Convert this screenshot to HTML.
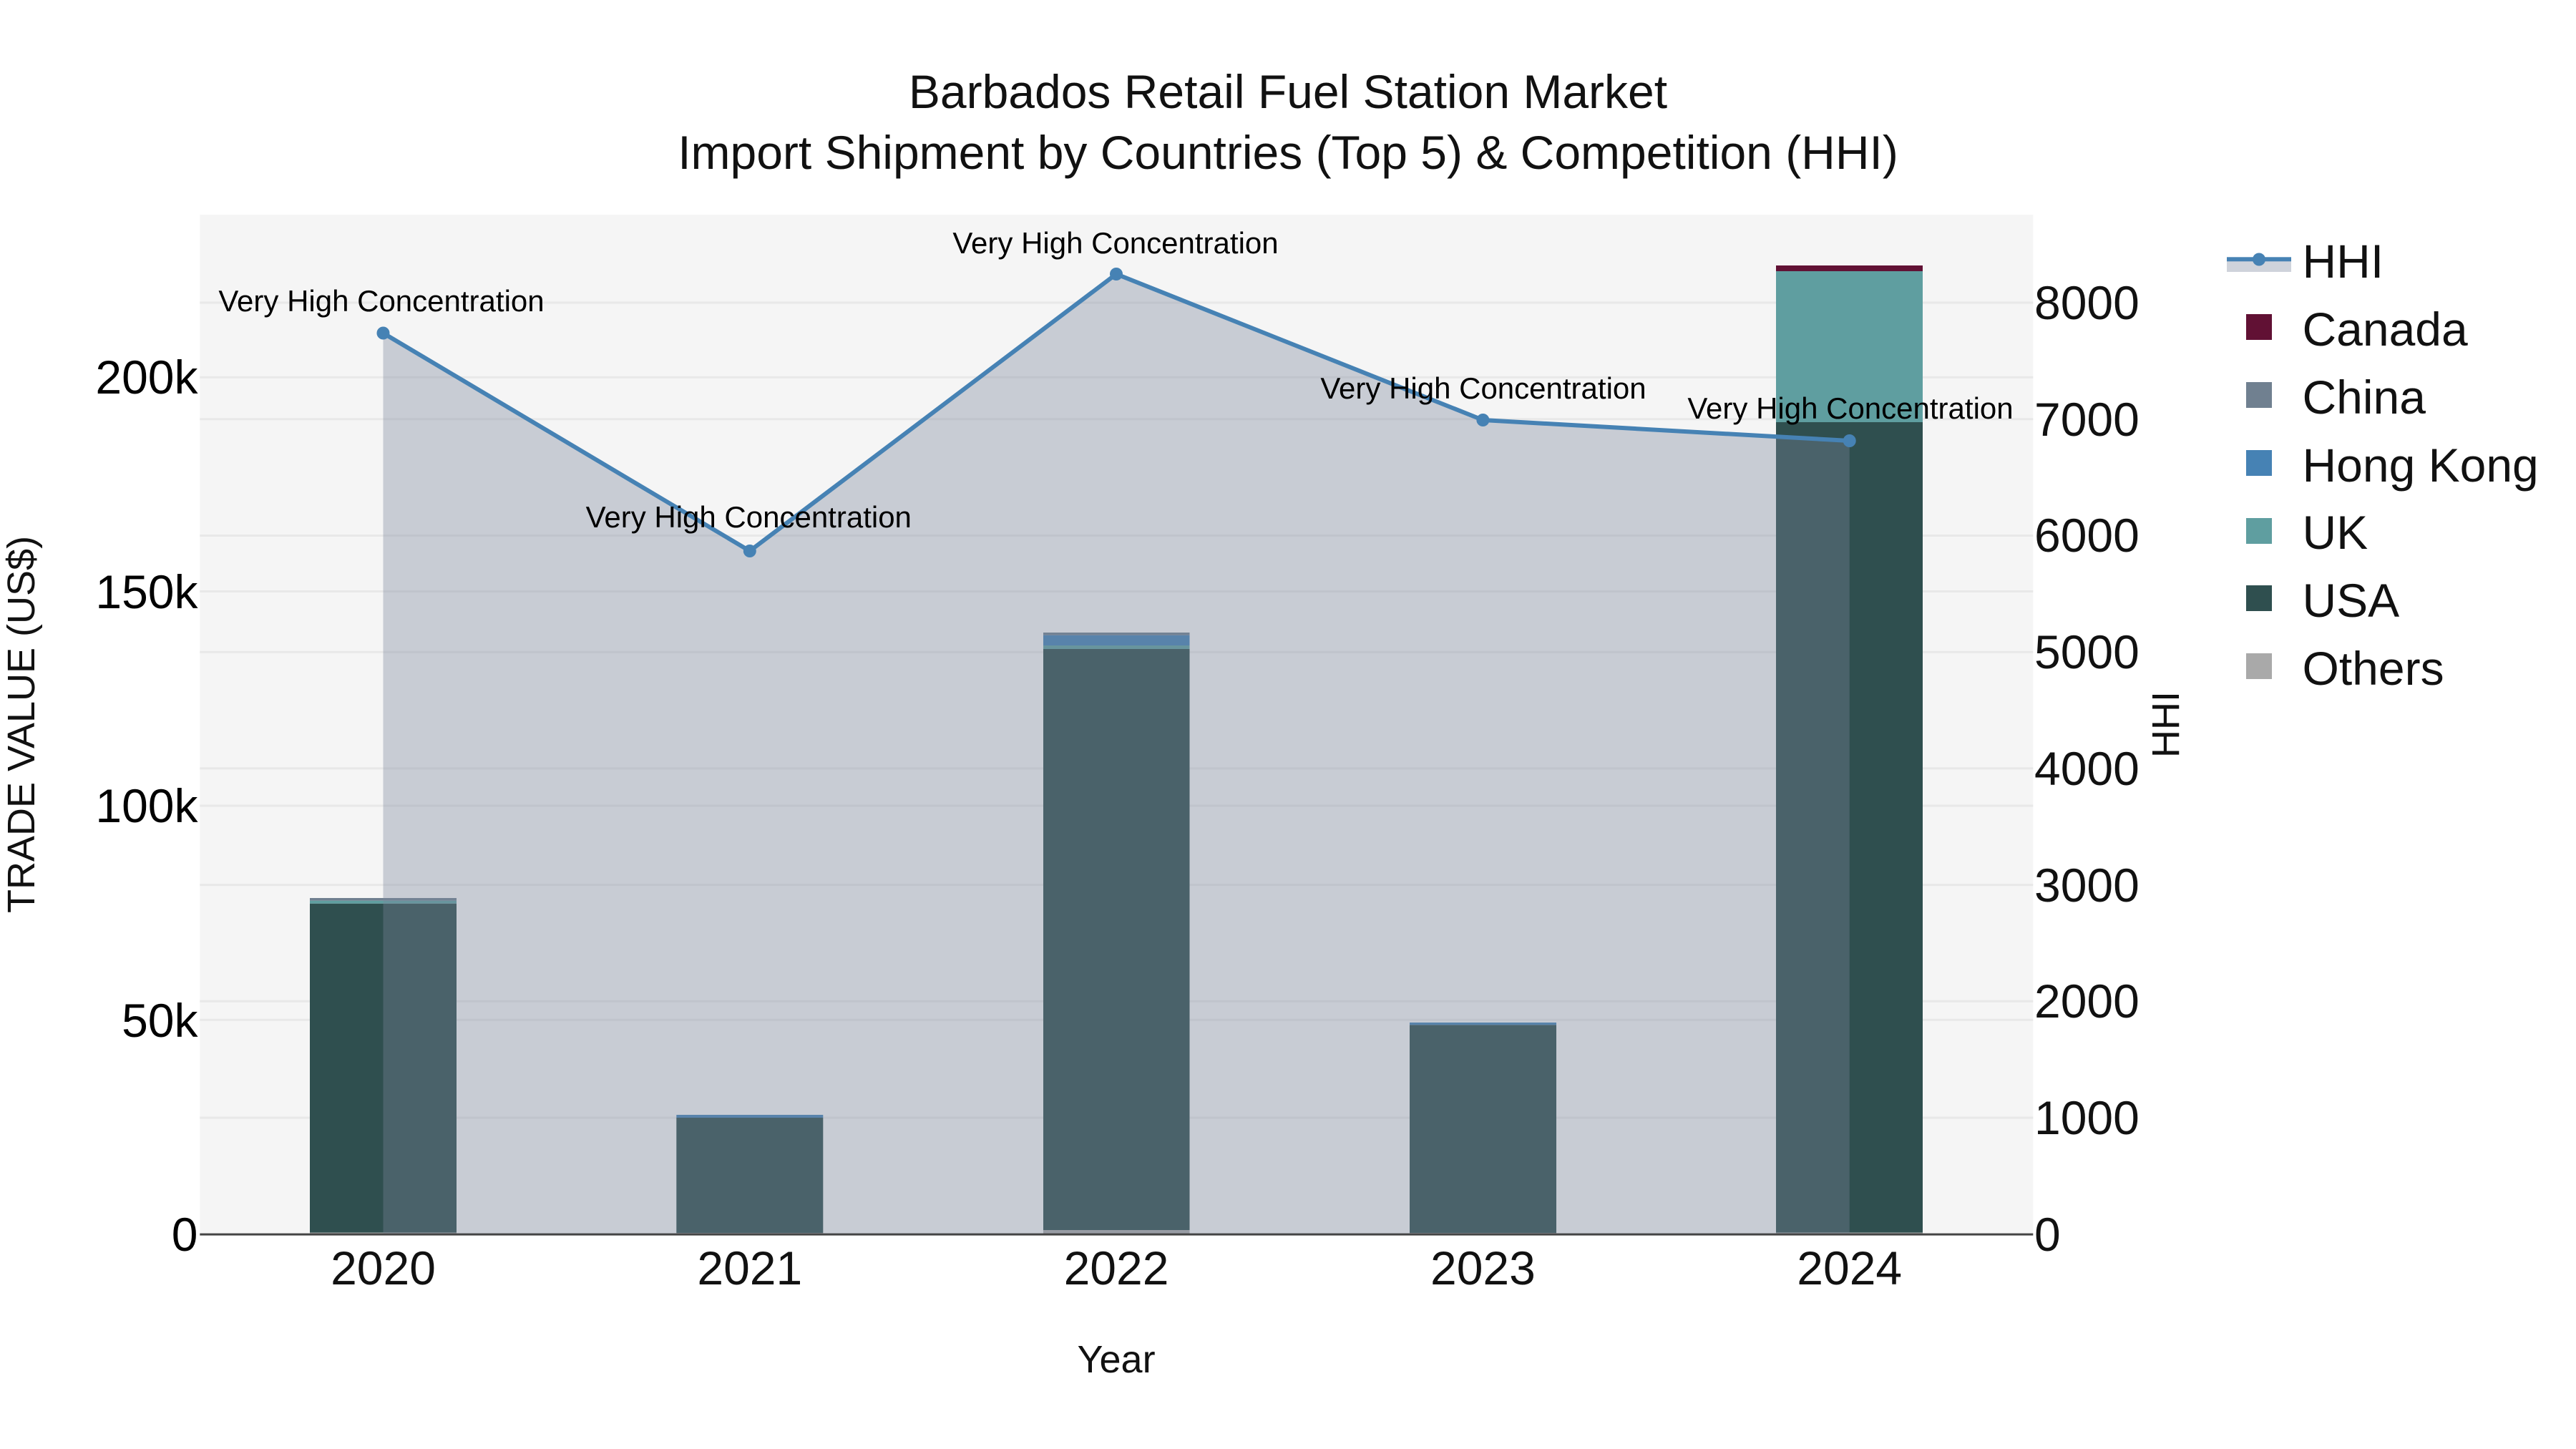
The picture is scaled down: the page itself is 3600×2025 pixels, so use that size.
<!DOCTYPE html>
<html>
<head>
<meta charset="utf-8">
<title>Barbados Retail Fuel Station Market</title>
<style>
html,body{margin:0;padding:0;background:#fff;width:3600px;height:2025px;overflow:hidden}
svg{display:block;font-family:"Liberation Sans",Arial,sans-serif}
</style>
</head>
<body>
<svg xmlns="http://www.w3.org/2000/svg" width="3600" height="2025" viewBox="0 0 3600 2025">
<rect width="3600" height="2025" fill="#fff"/>
<rect x="279.3" y="300" width="2562" height="1425" fill="#f5f5f5"/>
<g stroke="#e8e8e8" stroke-width="3" fill="none">
<path d="M279.3 423H2841.3M279.3 585.8H2841.3M279.3 748.5H2841.3M279.3 911.2H2841.3M279.3 1073.9H2841.3M279.3 1236.6H2841.3M279.3 1399.3H2841.3M279.3 1562H2841.3"/>
<path d="M279.3 527.3H2841.3M279.3 826.5H2841.3M279.3 1126H2841.3M279.3 1425.3H2841.3"/>
</g>
<!-- bars -->
<g>
<rect x="433" y="1262.7" width="205" height="460" fill="#2f4f4f"/>
<rect x="433" y="1258.7" width="205" height="4" fill="#5f9ea0"/>
<rect x="433" y="1255" width="205" height="3.7" fill="#708090"/>
<rect x="433" y="1722.7" width="205" height="2.3" fill="#a9a9a9"/>

<rect x="945.3" y="1562" width="205" height="161" fill="#2f4f4f"/>
<rect x="945.3" y="1558" width="205" height="4" fill="#4682b4"/>
<rect x="945.3" y="1723" width="205" height="2" fill="#a9a9a9"/>

<rect x="1458" y="907" width="204.5" height="812" fill="#2f4f4f"/>
<rect x="1458" y="902" width="204.5" height="5" fill="#5f9ea0"/>
<rect x="1458" y="887.7" width="204.5" height="14.3" fill="#4682b4"/>
<rect x="1458" y="884" width="204.5" height="3.7" fill="#708090"/>
<rect x="1458" y="1719" width="204.5" height="6" fill="#a9a9a9"/>

<rect x="1970" y="1432.3" width="205" height="290.7" fill="#2f4f4f"/>
<rect x="1970" y="1429" width="205" height="3.3" fill="#4682b4"/>
<rect x="1970" y="1723" width="205" height="2" fill="#a9a9a9"/>

<rect x="2482" y="590" width="205" height="1132.7" fill="#2f4f4f"/>
<rect x="2482" y="379" width="205" height="211" fill="#5f9ea0"/>
<rect x="2482" y="371" width="205" height="8" fill="#611134"/>
<rect x="2482" y="1722.7" width="205" height="2.3" fill="#a9a9a9"/>
</g>
<!-- HHI area -->
<path d="M535.5 465.5L1047.8 770L1560 383L2072.4 587L2584.7 616V1725H535.5Z" fill="rgb(122,134,156)" fill-opacity="0.36"/>
<!-- axis -->
<rect x="279.3" y="1723.6" width="2562" height="3" fill="#444"/>
<!-- HHI line -->
<path d="M535.5 465.5L1047.8 770L1560 383L2072.4 587L2584.7 616" fill="none" stroke="#4682b4" stroke-width="6" stroke-linejoin="round"/>
<g fill="#4682b4">
<circle cx="535.5" cy="465.5" r="9"/>
<circle cx="1047.8" cy="770" r="9"/>
<circle cx="1560" cy="383" r="9"/>
<circle cx="2072.4" cy="587" r="9"/>
<circle cx="2584.7" cy="616" r="9"/>
</g>
<!-- annotations -->
<g font-size="42" text-anchor="middle" fill="#000">
<text x="533" y="435">Very High Concentration</text>
<text x="1046.3" y="737">Very High Concentration</text>
<text x="1559" y="354">Very High Concentration</text>
<text x="2073" y="557">Very High Concentration</text>
<text x="2586" y="585">Very High Concentration</text>
</g>
<!-- title -->
<g font-size="66" text-anchor="middle" fill="#111">
<text x="1800" y="151">Barbados Retail Fuel Station Market</text>
<text x="1800" y="236">Import Shipment by Countries (Top 5) &amp; Competition (HHI)</text>
</g>
<!-- left ticks -->
<g font-size="66" text-anchor="end" fill="#000">
<text x="276.5" y="550">200k</text>
<text x="276.5" y="850">150k</text>
<text x="276.5" y="1149">100k</text>
<text x="276.5" y="1449">50k</text>
<text x="276.5" y="1748">0</text>
</g>
<!-- right ticks -->
<g font-size="66" fill="#111">
<text x="2843" y="446">8000</text>
<text x="2843" y="609">7000</text>
<text x="2843" y="771">6000</text>
<text x="2843" y="934">5000</text>
<text x="2843" y="1097">4000</text>
<text x="2843" y="1260">3000</text>
<text x="2843" y="1422">2000</text>
<text x="2843" y="1585">1000</text>
<text x="2843" y="1748">0</text>
</g>
<!-- x ticks -->
<g font-size="66" text-anchor="middle" fill="#111">
<text x="535.5" y="1795">2020</text>
<text x="1047.8" y="1795">2021</text>
<text x="1560" y="1795">2022</text>
<text x="2072.4" y="1795">2023</text>
<text x="2584.7" y="1795">2024</text>
</g>
<!-- axis titles -->
<text x="1560" y="1918" font-size="54" text-anchor="middle" fill="#111">Year</text>
<text transform="translate(48 1012.5) rotate(-90)" font-size="54" text-anchor="middle" fill="#111">TRADE VALUE (US$)</text>
<text transform="translate(3045 1012.5) rotate(-90)" font-size="54" text-anchor="middle" fill="#111">HHI</text>
<!-- legend -->
<rect x="3112" y="362" width="90" height="18" fill="rgb(122,134,156)" fill-opacity="0.36"/>
<rect x="3112" y="359.3" width="90" height="6" fill="#4682b4"/>
<circle cx="3157" cy="362.5" r="9" fill="#4682b4"/>
<g>
<rect x="3139" y="439" width="36" height="36" fill="#611134"/>
<rect x="3139" y="534" width="36" height="36" fill="#708090"/>
<rect x="3139" y="629" width="36" height="36" fill="#4682b4"/>
<rect x="3139" y="724" width="36" height="36" fill="#5f9ea0"/>
<rect x="3139" y="818" width="36" height="36" fill="#2f4f4f"/>
<rect x="3139" y="913" width="36" height="36" fill="#a9a9a9"/>
</g>
<g font-size="66" fill="#111">
<text x="3217.5" y="388">HHI</text>
<text x="3217.5" y="483">Canada</text>
<text x="3217.5" y="578">China</text>
<text x="3217.5" y="673">Hong Kong</text>
<text x="3217.5" y="767">UK</text>
<text x="3217.5" y="862">USA</text>
<text x="3217.5" y="957">Others</text>
</g>
</svg>
</body>
</html>
